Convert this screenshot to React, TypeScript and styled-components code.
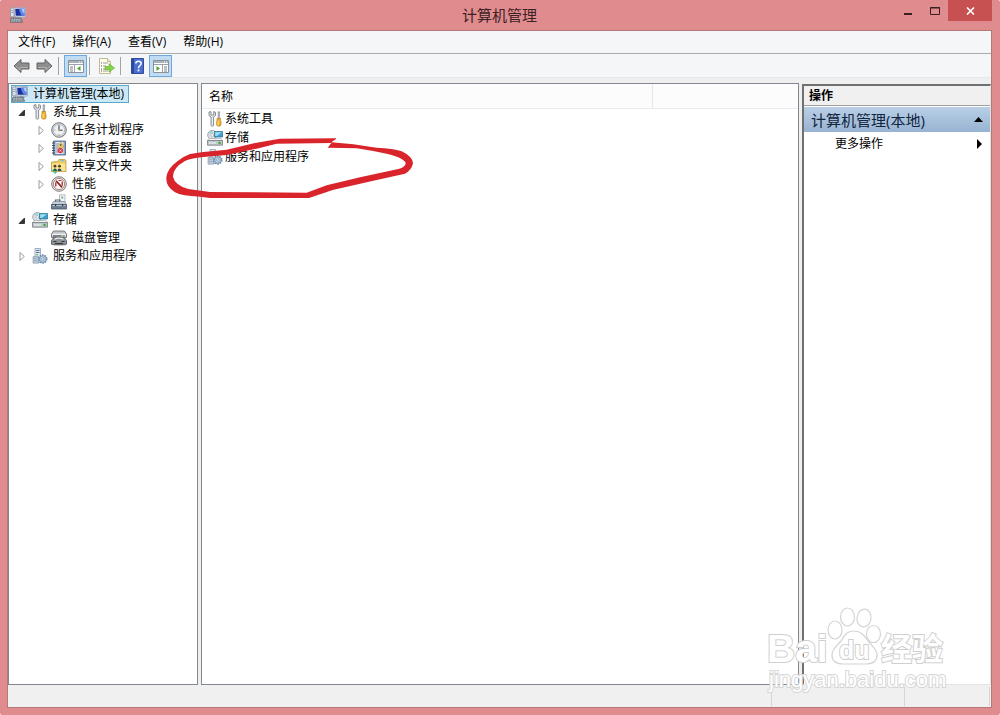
import React from "react";
import styled, { createGlobalStyle, css } from "styled-components";

const GlobalStyle = createGlobalStyle`
  *, *::before, *::after { box-sizing: border-box; }
  body {
    margin: 0;
    background: #fff;
    color: #000;
    font: 12px/18px "Open Sans", "Noto Sans CJK SC", sans-serif;
  }
  button { font: inherit; color: inherit; margin: 0; padding: 0; border: 0; background: none; }
  svg { display: block; flex: none; }
`;

/* ---------- window ---------- */

const Window = styled.div`
  display: flex;
  flex-direction: column;
  min-height: 100vh;
  padding: 0 8px 7px 7px;
  background: #e08b8d;
  border-radius: 2px;
  position: relative;
`;

const TitleBar = styled.header`
  display: grid;
  grid-template-columns: 1fr auto 1fr;
  height: 30px;
`;

const TitleIcon = styled.div`
  padding: 7px 0 0 3px;
`;

const Title = styled.h1`
  margin: 0;
  font-size: 15px;
  font-weight: 400;
  line-height: 31px;
  color: #3c2224;
`;

const Controls = styled.div`
  display: flex;
  justify-content: flex-end;
  align-items: flex-start;
`;

const ControlButton = styled.button<{ $close?: boolean }>`
  display: grid;
  place-items: center;
  width: ${(p) => (p.$close ? 44 : 27)}px;
  height: 21px;
  color: ${(p) => (p.$close ? "#fff" : "#3a1f21")};
  background: ${(p) => (p.$close ? "#c75050" : "transparent")};
`;

const Client = styled.div`
  flex: 1;
  display: flex;
  flex-direction: column;
  border: 1px solid #b57879;
  background: #efeff0;
`;

const MenuBar = styled.nav`
  display: flex;
  gap: 1px;
  height: 23px;
  padding-left: 2px;
  background: #f5f6f7;
  border-bottom: 1px solid #a9abad;
`;

const MenuItem = styled.button`
  padding: 0 8px;
  line-height: 22px;
`;

const Toolbar = styled.div`
  display: flex;
  align-items: flex-end;
  height: 24px;
  padding-left: 2px;
  background: #f5f6f7;
  border-bottom: 1px solid #e6e8ea;
`;

const ToolButton = styled.button<{ $active?: boolean }>`
  display: grid;
  place-items: center;
  width: 23px;
  height: 22px;
  ${(p) =>
    p.$active &&
    css`
      background: #c0dcf3;
      border: 1px solid #6fa9dc;
    `}
`;

const Separator = styled.span`
  width: 1px;
  height: 18px;
  margin: 0 5px 2px 2px;
  background: #a3a3a3;
`;

const Body = styled.main`
  flex: 1;
  display: grid;
  grid-template-columns: 190px minmax(0, 1fr) 189px;
  gap: 3px;
  padding-top: 5px;
`;

const Pane = styled.section`
  border: 1px solid #828790;
  background: #fff;
`;

/* ---------- tree ---------- */

const TreeList = styled.ul`
  list-style: none;
  margin: 0;
  padding: 1px 0 0 2px;
`;

const TreeRow = styled.li<{ $level: number; $selected?: boolean }>`
  display: flex;
  align-items: center;
  gap: 5px;
  width: fit-content;
  height: 18px;
  padding-left: ${(p) => (p.$level ? 1 + (p.$level - 1) * 19 : 0)}px;
  line-height: 18px;
  ${(p) =>
    p.$selected &&
    css`
      padding-right: 4px;
      border: 1px solid #5ba9c9;
      background: #cbe8f6;
      line-height: 16px;
    `}
`;

const Twisty = styled.button`
  display: grid;
  place-items: center;
  width: 20px;
  height: 18px;
  margin-right: -5px;
`;

const TwistySpace = styled.span`
  width: 20px;
  margin-right: -5px;
`;

/* ---------- list ---------- */

const List = styled.table`
  width: 100%;
  border-collapse: separate;
  border-spacing: 0;
  table-layout: fixed;
`;

const HeadCell = styled.th<{ $first?: boolean }>`
  width: ${(p) => (p.$first ? "451px" : "auto")};
  height: 25px;
  padding: 1px 7px 0;
  font-weight: 400;
  text-align: left;
  background: #fcfcfc;
  border-bottom: 1px solid #e8ebef;
  border-right: ${(p) => (p.$first ? "1px solid #e2e8ee" : "0")};
`;

const Cell = styled.td`
  height: 19px;
  padding: 0 5px;
`;

const CellContent = styled.span`
  display: flex;
  align-items: center;
  gap: 2px;
`;

/* ---------- actions ---------- */

const ActionsPane = styled.aside`
  background: #fff;
  border: solid;
  border-width: 2px 1px 1px 2px;
  border-color: #6f7072 #e3e3e3 #e3e3e3 #6f7072;
  margin-top: 1px;
`;

const ActionsHeading = styled.h2`
  margin: 0 0 1px;
  height: 20px;
  padding-left: 5px;
  font-size: 12px;
  font-weight: 700;
  line-height: 19px;
  background: #f0f0f0;
  border-bottom: 1px solid #a0a0a0;
`;

const ActionsGroup = styled.button`
  display: flex;
  align-items: center;
  justify-content: space-between;
  width: 100%;
  height: 25px;
  padding: 0 7px;
  font-size: 15px;
  color: #10243c;
  background: linear-gradient(#b9cfe6, #98b3d2);
`;

const ActionItem = styled.button`
  display: flex;
  align-items: center;
  justify-content: space-between;
  width: 100%;
  height: 24px;
  padding: 0 8px 0 31px;
`;

const StatusBar = styled.footer`
  display: grid;
  grid-template-columns: minmax(0, 1fr) 133px 85px;
  height: 22px;
  padding: 2px 1px 1px 0;
  background: #f0f0f0;
`;

const StatusCell = styled.span`
  border-right: 1px solid #d4d4d4;
`;

/* Free-hand mark and watermark lie over the window contents. */
const Scribble = styled.svg`
  position: absolute;
  left: 160px;
  top: 80px;
  pointer-events: none;
`;

const Watermark = styled.svg`
  position: absolute;
  right: 50px;
  bottom: 20px;
  pointer-events: none;
`;

/* ---------- icons ---------- */

const ComputerIcon = () => (
  <svg width="16" height="16" viewBox="0 0 16 16">
    <path d="M.500 1.500L4 .500v9.500l-3.500-.5z" fill="#dfe4ea" stroke="#8b96a5" strokeWidth=".8" />
    <path d="M1.200 3.500h2M1.200 5.500h2" stroke="#7d8a9b" strokeWidth=".8" />
    <path d="M4 1L15.500.500v9.500H5z" fill="#dde3ee" stroke="#97a3b5" strokeWidth=".8" />
    <path d="M5.200 2L14.500 1.600v7.200H5.800z" fill="#1b2f9e" />
    <path d="M9 1.900l5.500-.3v7.200H12C10.500 7 9.500 5 9 1.900z" fill="#5f86e6" />
    <path d="M11.500 1.800l3-.2v5C13 6 12 4 11.500 1.800z" fill="#b5cbf8" />
    <path d="M8 10h4l1.500 1.800H8z" fill="#a9b2be" />
    <path d="M1 11h10l1.500 4.200H0z" fill="#7c8691" stroke="#59626d" strokeWidth=".7" />
    <path d="M1.500 12.300h9.500M1 14h10.500" stroke="#d5dade" strokeDasharray="1.600 .8" strokeWidth=".8" />
  </svg>
);

const ToolsIcon = () => (
  <svg width="16" height="16" viewBox="0 0 16 16">
    <path d="M2 1v3.500L4 6v8.200c0 1.300 2.600 1.300 2.600 0V6l1.900-1.500V1.300L6.700.6V4H4V.6z" fill="#e4e6e8" stroke="#7e858c" strokeWidth=".9" />
    <path d="M11 .8h1.600V8H11z" fill="#b7bcc2" stroke="#7e858c" strokeWidth=".5" />
    <path d="M10 7.500h3.500v2l.5 1v3.300c0 1.800-4.400 1.800-4.400 0v-3.300l.4-1z" fill="#f0b429" stroke="#ad7610" strokeWidth=".6" />
    <path d="M11.200 10v4" stroke="#ffe39a" />
  </svg>
);

const ClockIcon = () => (
  <svg width="16" height="16" viewBox="0 0 16 16">
    <circle cx="8" cy="8" r="7.300" fill="#d6d6d4" stroke="#77797b" />
    <circle cx="8" cy="8" r="5.600" fill="#eef3fa" stroke="#a6a6a4" strokeWidth=".6" />
    <path d="M8 3.200V8.300h3.700" fill="none" stroke="#3f4856" strokeWidth="1.100" />
    <circle cx="8" cy="8.300" r="1" fill="#d8a23b" />
    <path d="M3.300 8h1M8 12.200v1" stroke="#7c8591" />
  </svg>
);

const EventIcon = () => (
  <svg width="16" height="16" viewBox="0 0 16 16">
    <path d="M2.500 1h12v14h-12z" fill="#8ba3c8" stroke="#4a5f86" strokeWidth=".8" />
    <path d="M4.500 2h8v12h-8z" fill="#dfe7f2" />
    <path d="M5 4h3M5 6h2M5 8h2M5 10h1.500M5 12h2" stroke="#6981a9" strokeWidth=".8" />
    <path d="M1 3h3M1 5.500h3M1 8h3M1 10.500h3M1 13h3" stroke="#444d5e" />
    <path d="M9.800 2l3 5.200H6.800z" fill="#ffd84d" stroke="#b78818" strokeWidth=".5" />
    <path d="M9.800 4v2" stroke="#333" />
    <circle cx="9.300" cy="10.500" r="2.700" fill="#d5353b" />
    <path d="M8.300 9.500l2 2m0-2l-2 2" stroke="#fff" strokeWidth=".8" />
  </svg>
);

const SharedIcon = () => (
  <svg width="16" height="16" viewBox="0 0 16 16">
    <path d="M.500 4L6.500 3.500 8 1.500h6l1 1V13.500H.500z" fill="#eecb62" stroke="#b8952f" strokeWidth=".7" />
    <path d="M9.500 2.600h3.800" stroke="#7cc0dc" strokeWidth="1.200" />
    <path d="M1.200 5.500h13V13h-13z" fill="#f9e593" />
    <circle cx="4" cy="8.200" r="1.400" fill="#4d3a24" />
    <circle cx="8.500" cy="8.200" r="1.400" fill="#4d3a24" />
    <path d="M2 13c0-3.500 4-3.500 4 0z" fill="#12604f" />
    <path d="M6.500 13c0-3.500 4-3.500 4 0z" fill="#27486f" />
    <path d="M.700 11.500c0 2 1.500 3 4.300 3M3.500 13L5.500 14.500l-2 1.200" fill="none" stroke="#4cba8c" />
  </svg>
);

const PerfIcon = () => (
  <svg width="16" height="16" viewBox="0 0 16 16">
    <circle cx="8" cy="8" r="7.300" fill="#e6e6e6" stroke="#7b7d80" />
    <circle cx="8" cy="8" r="5.600" fill="#fff" stroke="#a9605e" strokeWidth=".8" />
    <path d="M4.800 10.500V6.200M11.200 9.800V5.500" stroke="#b2302f" strokeWidth="1.400" />
    <path d="M5 4.800l6 6.600" stroke="#8d2426" strokeWidth="1.700" />
    <path d="M7.500 4.500h3" stroke="#b2302f" />
  </svg>
);

const DeviceIcon = () => (
  <svg width="16" height="16" viewBox="0 0 16 16">
    <path d="M8.500.800h5.500V9H8.500z" fill="#f2f5f7" stroke="#98a2ab" strokeWidth=".7" />
    <path d="M10.200 2.500h2v2h-2z" fill="#7bac71" />
    <path d="M4.500 8V6h4.500v2" fill="none" stroke="#56616c" strokeWidth="1.100" />
    <path d="M2.500 7.500h11l2 3.500H.500z" fill="#c3ced8" stroke="#697681" strokeWidth=".6" />
    <path d="M.500 10.500h15v4.500H.500z" fill="#6c7f94" stroke="#4b5866" strokeWidth=".8" />
    <path d="M1.500 11.500h13" stroke="#b9c6d2" />
    <path d="M4 10h1.200v2H4zM11 10h1.200v2H11z" fill="#2f3842" />
  </svg>
);

const StorageIcon = () => (
  <svg width="16" height="16" viewBox="0 0 16 16">
    <circle cx="5.200" cy="5" r="4.500" fill="#dce1e5" stroke="#8d969f" strokeWidth=".8" />
    <path d="M5.200 5L1.800 2.500a4 4 0 014-1.500z" fill="#9ed6cb" />
    <circle cx="5.200" cy="5" r="1.400" fill="#fff" stroke="#87919b" strokeWidth=".5" />
    <path d="M7.500 1.500h8v5.500h-8z" fill="#3c9fd0" stroke="#24708f" strokeWidth=".7" />
    <path d="M8.200 2.200h6.600l-5 3.800H8.200z" fill="#a0def2" />
    <path d="M2 8.500h12l1.500 2.500H.500z" fill="#f2f3f4" stroke="#989da2" strokeWidth=".6" />
    <path d="M.500 10.500h15v4.700H.500z" fill="#c3c8cd" stroke="#727a82" strokeWidth=".8" />
    <path d="M2 13h7" stroke="#f3f5f6" />
    <path d="M11.500 11.800h2.200v2.200h-2.200z" fill="#35b02e" />
  </svg>
);

const DiskIcon = () => (
  <svg width="16" height="16" viewBox="0 0 16 16">
    <path d="M2.500 1h11l2 3v3.500H.500V4z" fill="#c4c6c9" stroke="#626568" strokeWidth=".8" />
    <path d="M1 4.300h14" stroke="#fff" />
    <path d="M2 6h8.500" stroke="#3e4144" />
    <path d="M11.500 5.200h2v1.400h-2z" fill="#70a557" />
    <path d="M2.500 8h11l2 2.500v3.700c0 1-15 1-15 0v-3.700z" fill="#8f9397" stroke="#4d5054" strokeWidth=".8" />
    <path d="M3.500 9.300c2-1.500 7-1.500 9 0" fill="none" stroke="#eceeef" strokeWidth="1.200" />
    <path d="M2.500 11.500h3M10.500 11.500h3M4 13.500h8" stroke="#34373a" />
  </svg>
);

const ServicesIcon = () => (
  <svg width="16" height="16" viewBox="0 0 16 16">
    <path d="M3 .500h5.500v14H3z" fill="#dce6ef" stroke="#8da0b2" strokeWidth=".8" />
    <path d="M4.200 2.500h3.300M4.200 4.500h3.300" stroke="#5f7890" />
    <path d="M4.200 6.800h1.800" stroke="#53a85a" />
    <path d="M1 8.500h5.500v6.700H1z" fill="#b9c7d4" stroke="#8296aa" strokeWidth=".6" />
    <path d="M2 10.500h3M2 12.500h3" stroke="#8fa3b6" strokeWidth=".7" />
    <circle cx="10.800" cy="11" r="3.700" fill="#b2c8dc" stroke="#688ba9" strokeWidth="2" strokeDasharray="1.500 .820" />
    <circle cx="10.800" cy="11" r="3.100" fill="#b8cfe2" stroke="#7898b4" strokeWidth=".6" />
    <circle cx="10.800" cy="11" r="1.200" fill="#f7fafc" stroke="#67849e" strokeWidth=".6" />
  </svg>
);

const ArrowIcon = ({ forward = false }: { forward?: boolean }) => (
  <svg width="17" height="16" viewBox="0 0 17 16">
    <path
      d={forward ? "M16 8L9 1.500V5H1v6h8v3.500z" : "M1 8l7-6.500V5h8v6H8v3.500z"}
      fill="#8e8e8e"
      stroke="#626262"
      strokeLinejoin="round"
    />
    <path d={forward ? "M2 9.500h8v2.500l4.300-4" : "M15 9.500H7v2.500L2.700 8"} fill="none" stroke="#b4b4b4" />
  </svg>
);

const PaneIcon = ({ right = false }: { right?: boolean }) => (
  <svg width="16" height="14" viewBox="0 0 16 14">
    <path d="M.500 1.500h15v12H.500z" fill="#fff" stroke="#8b919a" />
    <path d="M1 2h14v2H1z" fill="#a9b0ba" />
    <path d="M11 3h1M13 3h1" stroke="#fff" />
    <path d="M1 5.500h14" stroke="#9aa2ad" />
    <path d={right ? "M9.500 5.500v8" : "M6.500 5.500v8"} stroke="#9aa2ad" />
    <path d={right ? "M11 8h3M11 10h3M11 12h3" : "M2 8h3M2 10h3M2 12h3"} stroke="#7b8490" />
    <path d={right ? "M3.500 7l3.500 2.500L3.500 12z" : "M12.500 7L9 9.500l3.500 2.500z"} fill="#4ca431" />
  </svg>
);

const ExportIcon = () => (
  <svg width="17" height="16" viewBox="0 0 17 16">
    <path d="M1.500.500h8l3 3v12h-11z" fill="#fffdf0" stroke="#c4ba90" />
    <path d="M9.500.500v3h3" fill="#eee7c6" stroke="#c4ba90" />
    <path d="M3 5h1M3 8h1M3 11h1M3 13h1" stroke="#555" />
    <path d="M5 5h5M5 8h3M5 11h3M5 13h5" stroke="#9a9aa2" />
    <path d="M7 8.500h4V5.700l5.500 4.300L11 14.200v-2.700H7z" fill="#82d443" stroke="#5ba92c" strokeWidth=".6" />
  </svg>
);

const HelpIcon = () => (
  <svg width="13" height="16" viewBox="0 0 13 16">
    <path d="M.500.500h12v15H.500z" fill="#4a70cf" stroke="#2f4a9e" />
    <path d="M1 1h2v14H1z" fill="#2b479f" />
    <path d="M4.800 5.400C4.800 2.400 10.200 2.400 10.200 5.400 10.200 7.500 7.500 7.600 7.500 10.200" fill="none" stroke="#fff" strokeWidth="1.500" />
    <path d="M6.600 11.500h1.800v1.800H6.600z" fill="#fff" />
  </svg>
);

/* ---------- data ---------- */

type Node = { label: string; level: number; icon: React.ComponentType; open?: boolean; selected?: boolean };

const nodes: Node[] = [
  { label: "计算机管理(本地)", level: 0, icon: ComputerIcon, selected: true },
  { label: "系统工具", level: 1, icon: ToolsIcon, open: true },
  { label: "任务计划程序", level: 2, icon: ClockIcon, open: false },
  { label: "事件查看器", level: 2, icon: EventIcon, open: false },
  { label: "共享文件夹", level: 2, icon: SharedIcon, open: false },
  { label: "性能", level: 2, icon: PerfIcon, open: false },
  { label: "设备管理器", level: 2, icon: DeviceIcon },
  { label: "存储", level: 1, icon: StorageIcon, open: true },
  { label: "磁盘管理", level: 2, icon: DiskIcon },
  { label: "服务和应用程序", level: 1, icon: ServicesIcon, open: false },
];

const items = [
  { label: "系统工具", icon: ToolsIcon },
  { label: "存储", icon: StorageIcon },
  { label: "服务和应用程序", icon: ServicesIcon },
];

const menus = ["文件(F)", "操作(A)", "查看(V)", "帮助(H)"];

function Tree() {
  return (
    <TreeList role="tree" aria-label="计算机管理">
      {nodes.map(({ label, level, icon: Icon, open, selected }) => (
        <TreeRow
          key={label}
          role="treeitem"
          aria-level={level + 1}
          aria-expanded={open}
          aria-selected={!!selected}
          $level={level}
          $selected={selected}
        >
          {open !== undefined && (
            <Twisty aria-label={label}>
              <svg width="8" height="10" viewBox="0 0 8 10">
                {open ? (
                  <path d="M6.500 3v5.500H1z" fill="#333" stroke="#222" strokeWidth=".8" />
                ) : (
                  <path d="M2 1.500v8L6.300 5.500z" fill="#fff" stroke="#9a9a9a" />
                )}
              </svg>
            </Twisty>
          )}
          {open === undefined && level > 0 && <TwistySpace />}
          <Icon />
          <span>{label}</span>
        </TreeRow>
      ))}
    </TreeList>
  );
}

export default function App() {
  return (
    <Window>
      <GlobalStyle />
      <TitleBar>
        <TitleIcon>
          <ComputerIcon />
        </TitleIcon>
        <Title>计算机管理</Title>
        <Controls>
          <ControlButton aria-label="最小化">
            <svg width="9" height="10" viewBox="0 0 9 10">
              <path d="M1 7h8v2H1z" fill="currentColor" />
            </svg>
          </ControlButton>
          <ControlButton aria-label="最大化">
            <svg width="10" height="10" viewBox="0 0 10 10">
              <path d="M.500 1.500h9v7h-9zM0 2h10" fill="none" stroke="currentColor" />
            </svg>
          </ControlButton>
          <ControlButton aria-label="关闭" $close>
            <svg width="9" height="8" viewBox="0 0 9 8">
              <path d="M1 .500l7 7M8 .500l-7 7" stroke="currentColor" strokeWidth="1.600" />
            </svg>
          </ControlButton>
        </Controls>
      </TitleBar>

      <Client>
        <MenuBar>
          {menus.map((m) => (
            <MenuItem key={m}>{m}</MenuItem>
          ))}
        </MenuBar>
        <Toolbar role="toolbar">
          <ToolButton aria-label="后退"><ArrowIcon /></ToolButton>
          <ToolButton aria-label="前进"><ArrowIcon forward /></ToolButton>
          <Separator />
          <ToolButton aria-label="控制台树" $active><PaneIcon /></ToolButton>
          <Separator />
          <ToolButton aria-label="导出列表"><ExportIcon /></ToolButton>
          <Separator />
          <ToolButton aria-label="帮助"><HelpIcon /></ToolButton>
          <ToolButton aria-label="操作窗格" $active><PaneIcon right /></ToolButton>
        </Toolbar>

        <Body>
          <Pane>
            <Tree />
          </Pane>
          <Pane>
            <List>
              <thead>
                <tr>
                  <HeadCell $first scope="col">名称</HeadCell>
                  <HeadCell as="td" />
                </tr>
              </thead>
              <tbody>
                {items.map(({ label, icon: Icon }) => (
                  <tr key={label}>
                    <Cell colSpan={2}>
                      <CellContent>
                        <Icon />
                        {label}
                      </CellContent>
                    </Cell>
                  </tr>
                ))}
              </tbody>
            </List>
          </Pane>
          <ActionsPane>
            <ActionsHeading>操作</ActionsHeading>
            <ActionsGroup>
              计算机管理(本地)
              <svg width="9" height="5" viewBox="0 0 9 5">
                <path d="M0 5l4.500-5L9 5z" fill="#000" />
              </svg>
            </ActionsGroup>
            <ActionItem>
              更多操作
              <svg width="5" height="10" viewBox="0 0 5 10">
                <path d="M0 0l5 5-5 5z" fill="#000" />
              </svg>
            </ActionItem>
          </ActionsPane>
        </Body>
        <StatusBar>
          <StatusCell />
          <StatusCell />
          <StatusCell />
        </StatusBar>
      </Client>

      <Scribble width="270" height="130" viewBox="0 0 810 390" aria-hidden="true">
        <path
          fillRule="evenodd"
          fill="#d8242a"
          d="M528 175L360 176L290 188L200 209L130 216L90 222Q68 230 52 244Q22 266 19 292Q17 320 45 337Q65 348 120 350L150 354L447 354L518 330L640 302L735 281Q754 272 759 250Q758 230 725 214Q700 205 650 203L580 193L514 187L528 177Z
             M503 203L590 205L640 213L680 221Q733 234 737 249Q737 261 715 267L600 292L500 316L440 338L150 336L85 327Q44 315 39 290Q38 264 75 243Q90 236 130 231L200 225L290 206L350 191L514 189Z"
        />
      </Scribble>

      <Watermark width="184" height="92" viewBox="0 0 184 92" aria-hidden="true">
        <g fill="#fff" stroke="#d4d4d4" strokeWidth="1.200">
          <ellipse cx="69" cy="27" rx="7" ry="9" />
          <ellipse cx="81.500" cy="14" rx="7" ry="9" />
          <ellipse cx="98" cy="15" rx="7" ry="9" transform="rotate(8 98 15)" />
          <ellipse cx="107.500" cy="31" rx="7" ry="8.500" />
          <path d="M88 28c7 0 10 4 14 10 5 6 9 8 9 14 0 7-5 9-11 9H77c-7 0-11-3-11-9s4-8 9-14c4-6 6-10 13-10z" />
        </g>
        <g fill="#fff" stroke="#cfcfcf" strokeWidth="2" paintOrder="stroke" fontFamily="Liberation Sans, Noto Sans CJK SC, sans-serif">
          <text x="1" y="59" fontSize="39" fontWeight="700">Bai</text>
          <text x="73" y="56" fontSize="25" fontWeight="700">du</text>
          <text x="115" y="57" fontSize="31" fontWeight="700" fontFamily="Noto Sans CJK SC, sans-serif">经验</text>
          <text x="3" y="84" fontSize="22" stroke="#d6d6d6">jingyan.baidu.com</text>
        </g>
      </Watermark>
    </Window>
  );
}
